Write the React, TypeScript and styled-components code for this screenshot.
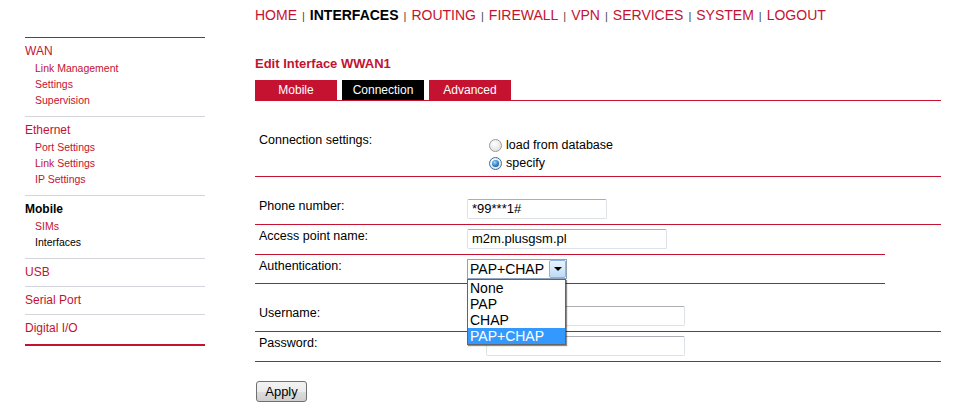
import * as React from "react";
import styled, { createGlobalStyle } from "styled-components";

const RED = "#c41230";

const GlobalStyle = createGlobalStyle`
  html, body {
    margin: 0;
    padding: 0;
    background: #fff;
    font-family: "Liberation Sans", Arial, sans-serif;
  }
`;

const Page = styled.div`
  display: flex;
  align-items: flex-start;
  width: 964px;
  height: 417px;
  overflow: hidden;
`;

const Sidebar = styled.div`
  width: 180px;
  margin: 37px 0 0 25px;
  border-top: 1px solid ${RED};
`;

const Group = styled.div<{ $hasItems?: boolean; $last?: boolean }>`
  padding: 5px 0 ${(p) => (p.$hasItems ? "8px" : p.$last ? "8px" : "6px")};
  border-bottom: ${(p) => (p.$last ? `2px solid ${RED}` : "1px solid #d4d4dc")};
`;

const GroupTitle = styled.div<{ $active?: boolean }>`
  font-size: 12px;
  line-height: 16px;
  color: ${(p) => (p.$active ? "#000" : RED)};
  font-weight: ${(p) => (p.$active ? "bold" : "normal")};
`;

const SubList = styled.div`
  padding-top: 1px;
`;

const SubItem = styled.div<{ $active?: boolean }>`
  font-size: 10.5px;
  line-height: 16px;
  height: 16px;
  padding-left: 10px;
  color: ${(p) => (p.$active ? "#000" : RED)};
`;

const Main = styled.div`
  width: 686px;
  margin-left: 50px;
`;

const Nav = styled.div`
  padding-top: 6px;
  height: 18px;
  font-size: 14px;
  line-height: 18px;
  white-space: nowrap;
`;

const NavLink = styled.span<{ $active?: boolean }>`
  color: ${(p) => (p.$active ? "#000" : RED)};
  font-weight: ${(p) => (p.$active ? "bold" : "normal")};
`;

const NavSep = styled.span`
  font-size: 11px;
  color: #444;
  margin: 0 5px;
`;

const Title = styled.div`
  margin-top: 32px;
  font-size: 13px;
  line-height: 16px;
  font-weight: bold;
  color: ${RED};
`;

const Tabs = styled.div`
  display: flex;
  gap: 5px;
  margin-top: 8px;
  border-bottom: 1px solid ${RED};
`;

const Tab = styled.div<{ $active?: boolean }>`
  width: 82px;
  height: 20px;
  line-height: 20px;
  text-align: center;
  font-size: 12px;
  color: #fff;
  background: ${(p) => (p.$active ? "#000" : RED)};
`;

const Row = styled.div<{ $short?: boolean; $top?: number; $bottom?: number }>`
  display: grid;
  grid-template-columns: 212px 1fr;
  align-items: start;
  width: ${(p) => (p.$short ? "630px" : "686px")};
  padding: ${(p) => p.$top ?? 4}px 0 ${(p) => p.$bottom ?? 5}px;
  border-bottom: 1px solid ${RED};
`;

const Label = styled.div`
  padding-left: 4px;
  font-size: 12.5px;
  line-height: 14px;
  color: #000;
`;

const Value = styled.div<{ $indent?: number }>`
  position: relative;
  padding-left: ${(p) => p.$indent ?? 0}px;
`;

const Spacer = styled.div<{ $h: number }>`
  height: ${(p) => p.$h}px;
`;

const RadioList = styled.div`
  padding-top: 3px;
`;

const RadioLine = styled.div`
  display: flex;
  align-items: center;
  gap: 4px;
  height: 18px;
  font-size: 12.5px;
  color: #000;
`;

const RadioDot = styled.span<{ $checked?: boolean }>`
  position: relative;
  display: inline-block;
  box-sizing: border-box;
  width: 13px;
  height: 13px;
  border-radius: 50%;
  border: 1px solid ${(p) => (p.$checked ? "#3d6e9a" : "#9a9a9a")};
  background: radial-gradient(circle at 40% 35%, #ffffff 0%, #e4e4e4 70%, #cfcfcf 100%);
  &::after {
    content: "";
    display: ${(p) => (p.$checked ? "block" : "none")};
    position: absolute;
    left: 2px;
    top: 2px;
    width: 7px;
    height: 7px;
    border-radius: 50%;
    background: radial-gradient(circle at 40% 35%, #9fdcff 0%, #2f86cc 50%, #0f3f78 100%);
  }
`;

const TextInput = styled.div<{ $w: number }>`
  box-sizing: border-box;
  width: ${(p) => p.$w}px;
  height: 20px;
  border: 1px solid #dde2e8;
  border-top-color: #abadb3;
  border-radius: 2px;
  padding: 0 4px;
  font-size: 13px;
  line-height: 18px;
  color: #000;
`;

const Select = styled.div`
  box-sizing: border-box;
  display: flex;
  width: 100px;
  height: 20px;
  border: 1px solid #8ea4bd;
  background: #fff;
  font-size: 14px;
  line-height: 18px;
`;

const SelectText = styled.div`
  flex: 1;
  padding-left: 2px;
  color: #000;
`;

const SelectArrow = styled.div`
  width: 17px;
  height: 18px;
  display: flex;
  align-items: center;
  justify-content: center;
  box-sizing: border-box;
  border: 1px solid #8db2e3;
  border-radius: 2px;
  background: linear-gradient(#eaf4fd, #bcdbf5);
  &::after {
    content: "";
    border-left: 4px solid transparent;
    border-right: 4px solid transparent;
    border-top: 4px solid #000;
  }
`;

const DropList = styled.div`
  position: absolute;
  left: 0;
  top: 20px;
  z-index: 5;
  box-sizing: border-box;
  width: 99px;
  border: 1px solid #646464;
  background: #fff;
  box-shadow: 1px 1px 1px rgba(0, 0, 0, 0.45);
`;

const Option = styled.div<{ $selected?: boolean }>`
  height: 16px;
  line-height: 16px;
  padding-left: 2px;
  font-size: 14px;
  color: ${(p) => (p.$selected ? "#fff" : "#000")};
  background: ${(p) => (p.$selected ? "#3399ff" : "#fff")};
`;

const ApplyButton = styled.button`
  margin: 19px 0 0 1px;
  width: 51px;
  height: 21px;
  padding: 0;
  border: 1px solid #707070;
  border-radius: 3px;
  background: linear-gradient(#f3f3f3 0%, #ebebeb 50%, #dddddd 51%, #cfcfcf 100%);
  font-family: "Liberation Sans", Arial, sans-serif;
  font-size: 13px;
  color: #000;
`;

const navItems = ["HOME", "INTERFACES", "ROUTING", "FIREWALL", "VPN", "SERVICES", "SYSTEM", "LOGOUT"];

const menu = [
  { title: "WAN", items: ["Link Management", "Settings", "Supervision"] },
  { title: "Ethernet", items: ["Port Settings", "Link Settings", "IP Settings"] },
  { title: "Mobile", items: ["SIMs", "Interfaces"], active: true },
  { title: "USB", items: [] },
  { title: "Serial Port", items: [] },
  { title: "Digital I/O", items: [] }
];

const authOptions = ["None", "PAP", "CHAP", "PAP+CHAP"];

export default function App() {
  return (
    <Page>
      <GlobalStyle />
      <Sidebar>
        {menu.map((g, i) => (
          <Group key={g.title} $hasItems={g.items.length > 0} $last={i === menu.length - 1}>
            <GroupTitle $active={g.active}>{g.title}</GroupTitle>
            {g.items.length > 0 && (
              <SubList>
                {g.items.map((it) => (
                  <SubItem key={it} $active={it === "Interfaces"}>
                    {it}
                  </SubItem>
                ))}
              </SubList>
            )}
          </Group>
        ))}
      </Sidebar>

      <Main>
        <Nav>
          {navItems.map((n, i) => (
            <React.Fragment key={n}>
              {i > 0 && <NavSep>|</NavSep>}
              <NavLink $active={n === "INTERFACES"}>{n}</NavLink>
            </React.Fragment>
          ))}
        </Nav>

        <Title>Edit Interface WWAN1</Title>

        <Tabs>
          <Tab>Mobile</Tab>
          <Tab $active>Connection</Tab>
          <Tab>Advanced</Tab>
        </Tabs>

        <Row $top={32} $bottom={4}>
          <Label>Connection settings:</Label>
          <Value $indent={22}>
            <RadioList>
              <RadioLine>
                <RadioDot />
                load from database
              </RadioLine>
              <RadioLine>
                <RadioDot $checked />
                specify
              </RadioLine>
            </RadioList>
          </Value>
        </Row>

        <Spacer $h={18} />

        <Row>
          <Label>Phone number:</Label>
          <Value>
            <TextInput $w={140}>*99***1#</TextInput>
          </Value>
        </Row>
        <Row $short>
          <Label>Access point name:</Label>
          <Value>
            <TextInput $w={200}>m2m.plusgsm.pl</TextInput>
          </Value>
        </Row>
        <Row $short $bottom={4}>
          <Label>Authentication:</Label>
          <Value>
            <Select>
              <SelectText>PAP+CHAP</SelectText>
              <SelectArrow />
            </Select>
            <DropList>
              {authOptions.map((o) => (
                <Option key={o} $selected={o === "PAP+CHAP"}>
                  {o}
                </Option>
              ))}
            </DropList>
          </Value>
        </Row>

        <Spacer $h={18} />

        <Row>
          <Label>Username:</Label>
          <Value $indent={19}>
            <TextInput $w={199} />
          </Value>
        </Row>
        <Row>
          <Label>Password:</Label>
          <Value $indent={19}>
            <TextInput $w={199} />
          </Value>
        </Row>

        <ApplyButton>Apply</ApplyButton>
      </Main>
    </Page>
  );
}
